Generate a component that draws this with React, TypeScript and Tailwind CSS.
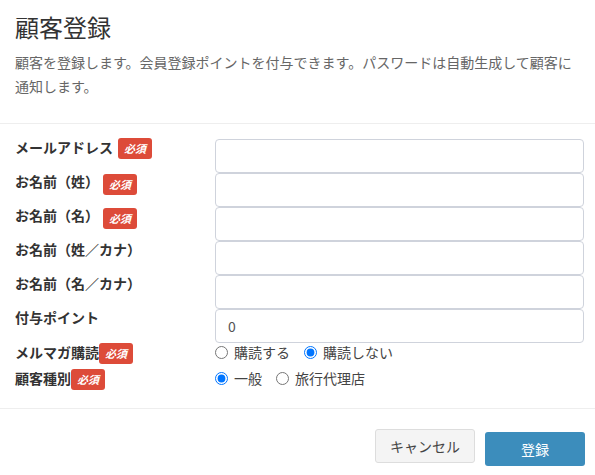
const font = { fontFamily: '"Noto Sans CJK JP", "Noto Sans", sans-serif' }

function Required({ className = '' }: { className?: string }) {
  return (
    <span
      className={`inline-flex h-[21px] w-[34px] shrink-0 items-center justify-center rounded-[3px] bg-[#dd4b39] text-[11px] font-bold italic leading-none text-white ${className}`}
    >
      必須
    </span>
  )
}

function TextRow({ label, badge, gap, value }: { label: string; badge?: boolean; gap?: string; value?: string }) {
  return (
    <div className="flex h-[34px]">
      <div className="-mt-[2px] flex w-[200px] shrink-0 items-start">
        <span className="text-[14px] font-bold leading-[20px] text-[#333]">{label}</span>
        {badge && <Required className={gap} />}
      </div>
      <input
        type="text"
        defaultValue={value}
        className="h-[34px] flex-1 rounded-[4px] border border-[#cfd3dc] bg-white px-[12px] text-[14px] text-[#555] outline-none"
      />
    </div>
  )
}

function Radio({ name, label, checked }: { name: string; label: string; checked?: boolean }) {
  return (
    <label className="flex items-center gap-[6px] text-[14px] leading-[20px] text-[#444]">
      <input type="radio" name={name} defaultChecked={checked} className="m-0 h-[13px] w-[13px]" />
      {label}
    </label>
  )
}

export default function App() {
  return (
    <div className="w-[595px] bg-white" style={font}>
      <div className="border-b border-[#eeeeee] px-[15px] pt-[12px] pb-[25px]">
        <h1 className="text-[24px] font-normal leading-[30px] text-[#333]">顧客登録</h1>
        <p className="mt-[8px] pr-[4px] text-[14px] leading-[24px] text-[#666]">
          顧客を登録します。会員登録ポイントを付与できます。パスワードは自動生成して顧客に通知します。
        </p>
      </div>

      <div className="border-b border-[#eeeeee] pt-[15px] pr-[11px] pb-[20px] pl-[15px]">
        <TextRow label="メールアドレス" badge gap="ml-[5px] mt-[1px]" />
        <TextRow label="お名前（姓）" badge gap="ml-[4px] mt-[3px]" />
        <TextRow label="お名前（名）" badge gap="ml-[4px] mt-[3px]" />
        <TextRow label="お名前（姓／カナ）" />
        <TextRow label="お名前（名／カナ）" />
        <TextRow label="付与ポイント" value="0" />

        <div className="mt-[-1px] flex h-[20px] items-center">
          <div className="flex w-[200px] shrink-0 items-center">
            <span className="text-[14px] font-bold leading-[20px] text-[#333]">メルマガ購読</span>
            <Required className="mt-[2px] h-[20px] w-[33px]" />
          </div>
          <div className="flex items-center gap-[14px]">
            <Radio name="mail" label="購読する" />
            <Radio name="mail" label="購読しない" checked />
          </div>
        </div>

        <div className="mt-[6px] flex h-[20px] items-center">
          <div className="flex w-[200px] shrink-0 items-center">
            <span className="text-[14px] font-bold leading-[20px] text-[#333]">顧客種別</span>
            <Required className="mt-[2px] h-[20px] w-[33px]" />
          </div>
          <div className="flex items-center gap-[14px]">
            <Radio name="type" label="一般" checked />
            <Radio name="type" label="旅行代理店" />
          </div>
        </div>
      </div>

      <div className="flex items-start justify-end gap-[10px] pt-[20px] pr-[10px] pb-[10px]">
        <button className="h-[34px] w-[100px] rounded-[3px] border border-[#dddddd] bg-[#f4f4f4] text-[14px] text-[#444]">
          キャンセル
        </button>
        <button className="mt-[3px] h-[34px] w-[100px] rounded-[3px] bg-[#3c8dbc] text-[14px] text-white">
          登録
        </button>
      </div>
    </div>
  )
}
